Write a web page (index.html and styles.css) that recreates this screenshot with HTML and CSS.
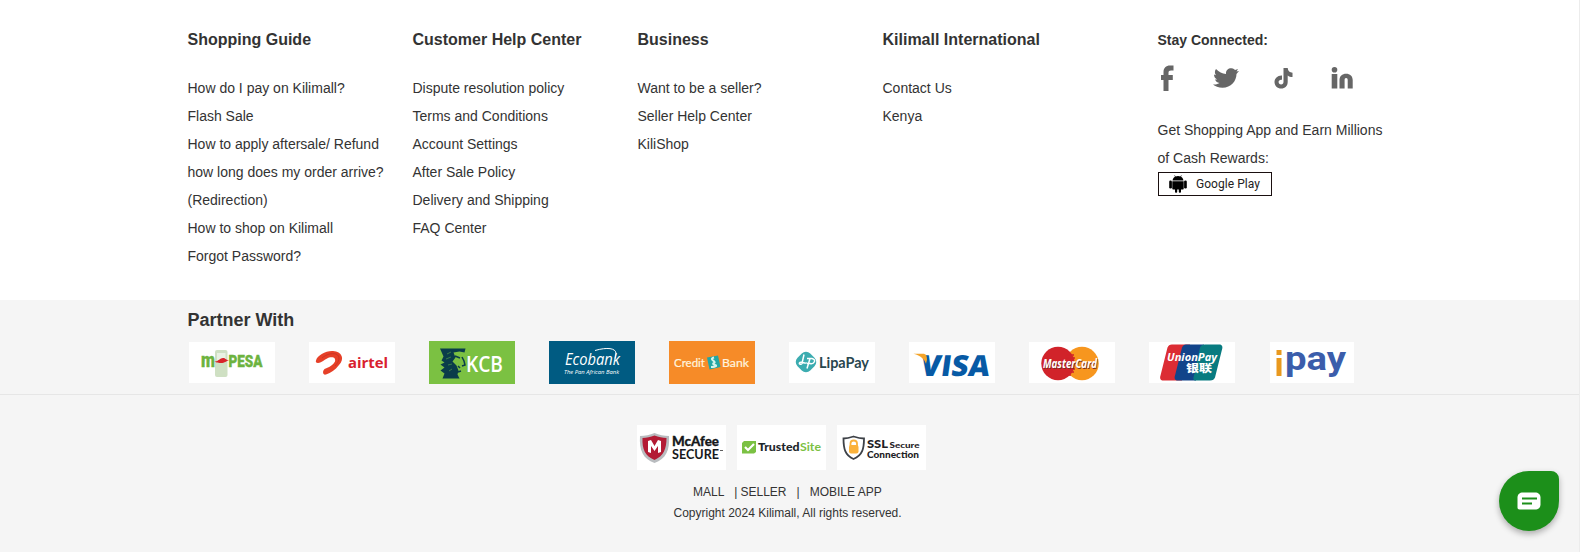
FILE: index.html
```html
<!DOCTYPE html>
<html lang="en">
<head>
<meta charset="utf-8">
<title>Kilimall</title>
<link rel="stylesheet" href="styles.css">
</head>
<body>
<footer class="footer">
  <section class="guide">
    <nav class="col col-a">
      <h3>Shopping Guide</h3>
      <ul><li>How do I pay on Kilimall?</li><li>Flash Sale</li><li>How to apply aftersale/ Refund</li><li>how long does my order arrive?<br>(Redirection)</li><li>How to shop on Kilimall</li><li>Forgot Password?</li></ul>
    </nav>
    <nav class="col col-a">
      <h3>Customer Help Center</h3>
      <ul><li>Dispute resolution policy</li><li>Terms and Conditions</li><li>Account Settings</li><li>After Sale Policy</li><li>Delivery and Shipping</li><li>FAQ Center</li></ul>
    </nav>
    <nav class="col col-b">
      <h3>Business</h3>
      <ul><li>Want to be a seller?</li><li>Seller Help Center</li><li>KiliShop</li></ul>
    </nav>
    <nav class="col col-c">
      <h3>Kilimall International</h3>
      <ul><li>Contact Us</li><li>Kenya</li></ul>
    </nav>
    <div class="connect">
      <h4>Stay Connected:</h4>
      <div class="social">
        <svg class="s-fb" width="16" height="27" viewBox="0 0 16 27"><path d="M5.500 26V15H3v-5h2.500V7c0-4 2.500-6.500 6.500-6.500h3.500v5H13c-1.700 0-2.500.7-2.500 2V10h4.300v5h-4.300v11z"/></svg>
        <svg class="s-tw" width="26" height="20" viewBox="0 0 26 20"><path d="M3 1c3 3 6 4.700 10 5C12.500 2 16 0 18.500.300c2 .2 3 1 3.500 1.700l3-1-1.500 2.500L26 3l-2.500 3C23.500 13 18 19.700 9.500 19.700 5.500 19.700 2 18.500 0 16.500c3 .3 5-.5 6.500-1.500-2.500-.5-4-2-4.500-3.500h2.200C2 10.500 1 8.500 1 6.500l2 .7C1.500 5.500 1.500 3 3 1z"/></svg>
        <svg class="s-tt" width="19" height="21" viewBox="0 0 19 21"><path d="M9.500 0h4.200c.2 3 2 4.500 4.800 4.800V9c-2 0-3.500-.5-4.800-1.500v6.200C13.700 18 11 20.500 7.200 20.500S.500 17.500.500 13.900 3.700 7.200 8 7.500v4.300c-2-.4-3.400.6-3.400 2.200 0 1.400 1 2.400 2.500 2.400s2.400-1 2.400-2.700z"/></svg>
        <svg class="s-in" width="22" height="22" viewBox="0 0 22 22"><circle cx="3.500" cy="2.800" r="2.800"/><path d="M.700 7h5.600v14.500H.700zM8.500 21.500V13c0-4 2.700-6.300 6.600-6.300S21.700 9 21.700 13v8.500h-5V13c0-1.300-.5-2-1.600-2s-1.500.7-1.500 2v8.500z"/></svg>
      </div>
      <p>Get Shopping App and Earn Millions of Cash Rewards:</p>
      <a class="play">
        <svg width="18" height="18" viewBox="0 0 18 18"><path d="M3.500 5.500C3.800 3.500 5 2.300 6 1.700L5.300.500l.5-.3.800 1.200a6.500 6.500 0 0 1 4.800 0L12.200.200l.5.3L12 1.700c1 .6 2.200 1.800 2.500 3.800zM3.300 6.200h11.400v7.300c0 .6-.4 1-1 1H12v2.300c0 1.300-2.200 1.300-2.200 0v-2.300H8.200v2.300c0 1.300-2.200 1.300-2.200 0v-2.300H4.300c-.6 0-1-.4-1-1z"/><rect x=".2" y="5.500" width="2.700" height="8" rx="1.300"/><rect x="15.100" y="5.500" width="2.700" height="8" rx="1.300"/></svg>
        <span>Google Play</span>
      </a>
    </div>
  </section>

  <section class="partners">
    <h2>Partner With</h2>
    <div class="logos">
      <svg class="logo" viewBox="0 0 86 43"><rect y="1" width="86" height="41" fill="#fff"/><rect x="26" y="9" width="12.500" height="27" rx="2" fill="#cfe0c3"/><rect x="28" y="12" width="8.500" height="9" fill="#e9f2e3"/><g font-family="Roboto" font-weight="900" fill="#6db33f" stroke="#6db33f" stroke-width=".4"><text x="12" y="26" font-size="21" textLength="14" lengthAdjust="spacingAndGlyphs">m</text><text x="39.500" y="26" font-size="17" textLength="34" lengthAdjust="spacingAndGlyphs">PESA</text></g><path d="M25 21c5-1 6-4 9-4s2 2 6 2c-3 1-4 3-8 3s-5-1-7-1z" fill="#d8232a"/></svg>
      <svg class="logo" viewBox="0 0 86 43"><rect y="1" width="86" height="41" fill="#fff"/><path d="M7 19.500c1-5 10-10 17-9.500 9 .5 12 8 6 14-4 5-8 8-13 9.500-3 1-4-3-1.500-5.500 5-1.500 9-4.500 10.500-7.500 1-4-2-5-6-4-4 1.500-7 5-11 5.500-2 0-2.500-1-2-2.500z" fill="#e64028"/><path d="M13 17c5-4 9-5 14-4 5 2 3 8-1 12" fill="none" stroke="#c43224" stroke-width=".8"/><text x="39" y="27" font-family="Open Sans" font-weight="700" font-size="15" fill="#d9202e" textLength="40" lengthAdjust="spacingAndGlyphs">airtel</text></svg>
      <svg class="logo" viewBox="0 0 86 43"><rect width="86" height="43" fill="#7bc142"/><path d="M11 7.500h25.500l-1 4-5-1-6 1 2 5-3 4 4 4 2 5-1 4 2 4H13.500l2-5-4-3 4-3-4-3 4-2-3-2 2-4z" fill="#0a3c4a"/><path d="M26 15l5 2m-2 8l2 2m-2 4l3-1m1-14l2 4 1 4-3 1" fill="none" stroke="#0a3c4a" stroke-width="1.500"/><path d="M18 13l4-2m-5 7l5-2m-3 8l4-1m-3 7l3-2" stroke="#4f9a47" stroke-width=".7"/><text x="37" y="30.500" font-family="Open Sans" font-weight="600" font-size="21" fill="#fff" textLength="37" lengthAdjust="spacingAndGlyphs">KCB</text></svg>
      <svg class="logo" viewBox="0 0 86 43"><rect width="86" height="43" fill="#005b82"/><g font-family="Open Sans" font-style="italic" fill="#fff"><text x="16" y="24" font-size="16" font-weight="500" textLength="55" lengthAdjust="spacingAndGlyphs">Ecobank</text><text x="15" y="33" font-size="6" textLength="55" lengthAdjust="spacingAndGlyphs">The Pan African Bank</text></g><path d="M46 9.500c12-3.500 21-2.500 21 3l-1 5" fill="none" stroke="#fff"/></svg>
      <svg class="logo" viewBox="0 0 86 43"><rect width="86" height="43" fill="#f68b28"/><g font-family="Lato" font-size="11" fill="#fff3df" stroke="#fff3df" stroke-width=".2"><text x="5" y="26" textLength="31" lengthAdjust="spacingAndGlyphs">Credit</text><text x="53" y="26" textLength="27" lengthAdjust="spacingAndGlyphs">Bank</text></g><path d="M38 16.500l11-2 2.500 11.500-11 2.500z" fill="#22a6a4"/><path d="M45 16.500c-6 2 3 4 0 5.500s3 2 2 3-3 1-5 1" fill="none" stroke="#d5f4eb" stroke-width="2"/></svg>
      <svg class="logo" viewBox="0 0 86 43"><rect y="1" width="86" height="41" fill="#fff"/><rect x="8" y="12" width="18" height="18" rx="6" transform="rotate(45 17 21)" fill="#3cacb0"/><path d="M15 13.500l-2 9c-1 2-4 0-2-1s6 2 7 0m0-4h5c5 1 2 6-2 5h-3m3-5l-3 10" fill="none" stroke="#fff" stroke-width="1.500"/><text x="30" y="26.500" font-family="Lato" font-weight="700" font-size="15.500" fill="#28464e" textLength="50" lengthAdjust="spacingAndGlyphs">LipaPay</text></svg>
      <svg class="logo" viewBox="0 0 86 43"><rect y="1" width="86" height="41" fill="#fff"/><g transform="translate(0 34.500) skewX(-8)"><text x="10.500" y="0" font-family="Open Sans" font-weight="800" font-size="29" fill="#075aa5" textLength="69" lengthAdjust="spacingAndGlyphs">VISA</text></g><path d="M4.500 12.800H14c3 0 4 2 4 6l-1 4c-2-5-5-8-12.500-10z" fill="#f3a42a"/></svg>
      <svg class="logo" viewBox="0 0 86 43"><rect y="1" width="86" height="41" fill="#fff"/><circle cx="53" cy="22.500" r="16.700" fill="#f7961e"/><circle cx="29" cy="22.500" r="16.700" fill="#d1232a"/><path d="M37 14h8m-8 3h9m-8 11h8m-9 3h8m-9 3h6" stroke="#d1232a" stroke-width="1.400"/><text class="mc-word" x="14" y="27" font-family="Open Sans" font-style="italic" font-weight="700" font-size="11.500" fill="#fff" textLength="54" lengthAdjust="spacingAndGlyphs">MasterCard</text></svg>
      <svg class="logo" viewBox="0 0 86 43"><rect y="1" width="86" height="41" fill="#fff"/><path d="M23 3.500h18l-8 36H14.500c-3 0-4-2-3-5l7-28c1-2 2-3 4.500-3z" fill="#dc2c34"/><path d="M37 3.500h18l-8 36H29c-3 0-4-2-3-5l7-28c1-2 2-3 4-3z" fill="#12448a"/><path d="M56 3.500h14c3 0 4 2 3 5l-7 28c-1 2-2 3-5 3H47c-3 0-3-2-2-5l6-28c1-2 2-3 5-3z" fill="#087b80"/><text x="18" y="19.800" font-family="Open Sans" font-style="italic" font-weight="700" font-size="10" fill="#fff" textLength="50" lengthAdjust="spacingAndGlyphs">UnionPay</text><text x="37" y="31" font-family="Noto Sans CJK SC" font-weight="900" font-size="10" fill="#fff" textLength="26" lengthAdjust="spacingAndGlyphs">银联</text></svg>
      <svg class="logo" viewBox="0 0 86 43"><rect x="1" y="1" width="84" height="41" fill="#fff"/><path d="M7.500 9h5v5h-5zM7.500 17h5v18h-5z" fill="#e9991f"/><text x="16" y="29" font-family="Roboto" font-weight="700" font-size="34" fill="#3b5dab" textLength="61" lengthAdjust="spacingAndGlyphs">pay</text></svg>
    </div>
  </section>

  <section class="bottom">
    <div class="badges">
      <svg class="badge" viewBox="0 0 89 45"><rect width="89" height="45" fill="#fff"/><path d="M3 11c5 0 10-1 14.500-3C22 10 27 11 32 11c1 14-3 23-14.500 27C6 34 2 25 3 11z" fill="#b9bcbf"/><path d="M5.500 13c4 0 8-1 12-2.500 4 1.500 8 2.500 12 2.500 0 11-3 18-12 22C8 31 5 24 5.500 13z" fill="#b31b34"/><path d="M11 27V16l3-1 3.500 6 3.500-6 3 1v11l-3 1v-7l-3.500 5-3.500-5v7z" fill="#fff"/><g font-family="Lato" font-weight="900" font-size="12.500" fill="#17191c"><text x="35" y="21" stroke="#17191c" stroke-width=".3" textLength="47" lengthAdjust="spacingAndGlyphs">McAfee</text><text x="35" y="34" font-weight="700" textLength="47" lengthAdjust="spacingAndGlyphs">SECURE</text></g><path d="M83 25.500h3" stroke="#333" stroke-width=".8"/></svg>
      <svg class="badge" viewBox="0 0 89 45"><rect width="89" height="45" fill="#fff"/><path d="M7 16h12v11l-2 1.500H5V18z" fill="#7bc143"/><path d="M8 22l3 3 6-6" fill="none" stroke="#fff" stroke-width="2.200"/><g font-family="Lato" font-weight="900" font-size="10.500"><text x="21" y="26" fill="#20252a" textLength="41.500" lengthAdjust="spacingAndGlyphs">Trusted</text><text x="63" y="26" font-weight="700" fill="#7bc143" textLength="21" lengthAdjust="spacingAndGlyphs">Site</text></g></svg>
      <svg class="badge" viewBox="0 0 89 45"><rect width="89" height="45" fill="#fff"/><path d="M6.500 13.500c4 0 7-1 10-2 3 1 6 2 10.500 2 0 10-1.500 17-10.500 20.500C8 30.500 6.500 23.500 6.500 13.500z" fill="#fff" stroke="#3d4147" stroke-width="1.800"/><rect x="12" y="20" width="9.500" height="8.500" rx="2" fill="#fbb23b"/><path d="M13.500 21v-2.500c0-4 6.500-4 6.500 0V21" fill="none" stroke="#fbb23b" stroke-width="1.800"/><g font-family="Lato" font-weight="900" fill="#1e2125"><text x="30" y="23" font-size="12" textLength="21" lengthAdjust="spacingAndGlyphs">SSL</text><text x="52.500" y="23" font-size="8" textLength="30" lengthAdjust="spacingAndGlyphs">Secure</text><text x="30" y="33" font-size="8.500" textLength="52" lengthAdjust="spacingAndGlyphs">Connection</text></g></svg>
    </div>
    <div class="links"><span>MALL</span><i class="bar-a">|</i><span>SELLER</span><i class="bar-b">|</i><span>MOBILE APP</span></div>
    <p class="copy">Copyright 2024 Kilimall, All rights reserved.</p>
  </section>
</footer>
<button class="chat" aria-label="Chat"><svg width="24" height="18" viewBox="0 0 24 18"><path d="M6 .500h12c3.300 0 5.500 2 5.500 5v7c0 3-2.200 5-5.500 5H2.500c-1.300 0-2-.7-2-2v-10c0-3 2-5 5.500-5z" fill="#fff"/><path d="M5 6.500h15M5 11.500h10" stroke="#1c8f1a" stroke-width="2"/></svg></button>
</body>
</html>
```

FILE: styles.css
```css
* { box-sizing: border-box; }
body { margin: 0; background: #fff; color: #333; font-family: "Liberation Sans", Arial, sans-serif; font-size: 14px; overflow: hidden; }
h2, h3, h4, p, ul { margin: 0; padding: 0; }
ul { list-style: none; }
.footer { height: 552px; border-right: 1px solid #ececec; }
.guide { display: flex; height: 300px; padding: 26px 0 0 187.5px; line-height: 28px; }
.col h3 { font-size: 16px; line-height: 28px; margin-bottom: 20px; white-space: nowrap; }
.col-a { width: 225px; }
.col-b { width: 245px; }
.col-c { width: 275px; }
.connect { width: 240px; }
.connect h4 { font-size: 14px; line-height: 28px; }
.social { display: flex; align-items: center; height: 48px; fill: #666; }
.s-tw { margin-left: 39px; }
.s-tt { margin-left: 35px; }
.s-in { margin-left: 38px; }
.connect p { padding-top: 14px; }
.play { display: flex; align-items: center; width: 114px; height: 24px; margin-left: .5px; border: 1px solid #1a0f10; padding-left: 10px; gap: 9px; font: 12px Roboto, sans-serif; letter-spacing: .05px; color: #222; }
.partners { height: 95px; padding: 6px 0 0 187.5px; background: #f5f5f5; border-bottom: 1px solid #e6e6e6; }
.partners h2 { font-size: 18px; line-height: 28px; }
.logos { display: flex; gap: 34px; margin-top: 7px; padding-left: 1.5px; }
.logo { width: 86px; height: 43px; flex: none; overflow: visible; }
.mc-word { text-shadow: .7px .8px 0 #7a2d22; }
.bottom { height: 157px; padding: 30px 0 0 187.5px; background: #f5f5f5; font-size: 12px; }
.badges { display: flex; gap: 11px; padding-left: 449.5px; }
.badge { width: 89px; height: 45px; }
.links { display: flex; padding: 12px 0 0 505.5px; line-height: 20px; }
.links i { font-style: normal; }
.bar-a { margin: 0 3px 0 10px; }
.bar-b { margin: 0 10px; }
.copy { padding-left: 486px; line-height: 22px; }
.chat { position: fixed; left: 1499px; top: 471px; width: 60px; height: 60px; padding: 0; display: grid; place-items: center; border: 0; border-radius: 50% 8px 50% 50%; background: #1c8f1a; box-shadow: 0 3px 6px rgba(0,0,0,.3); }
```
